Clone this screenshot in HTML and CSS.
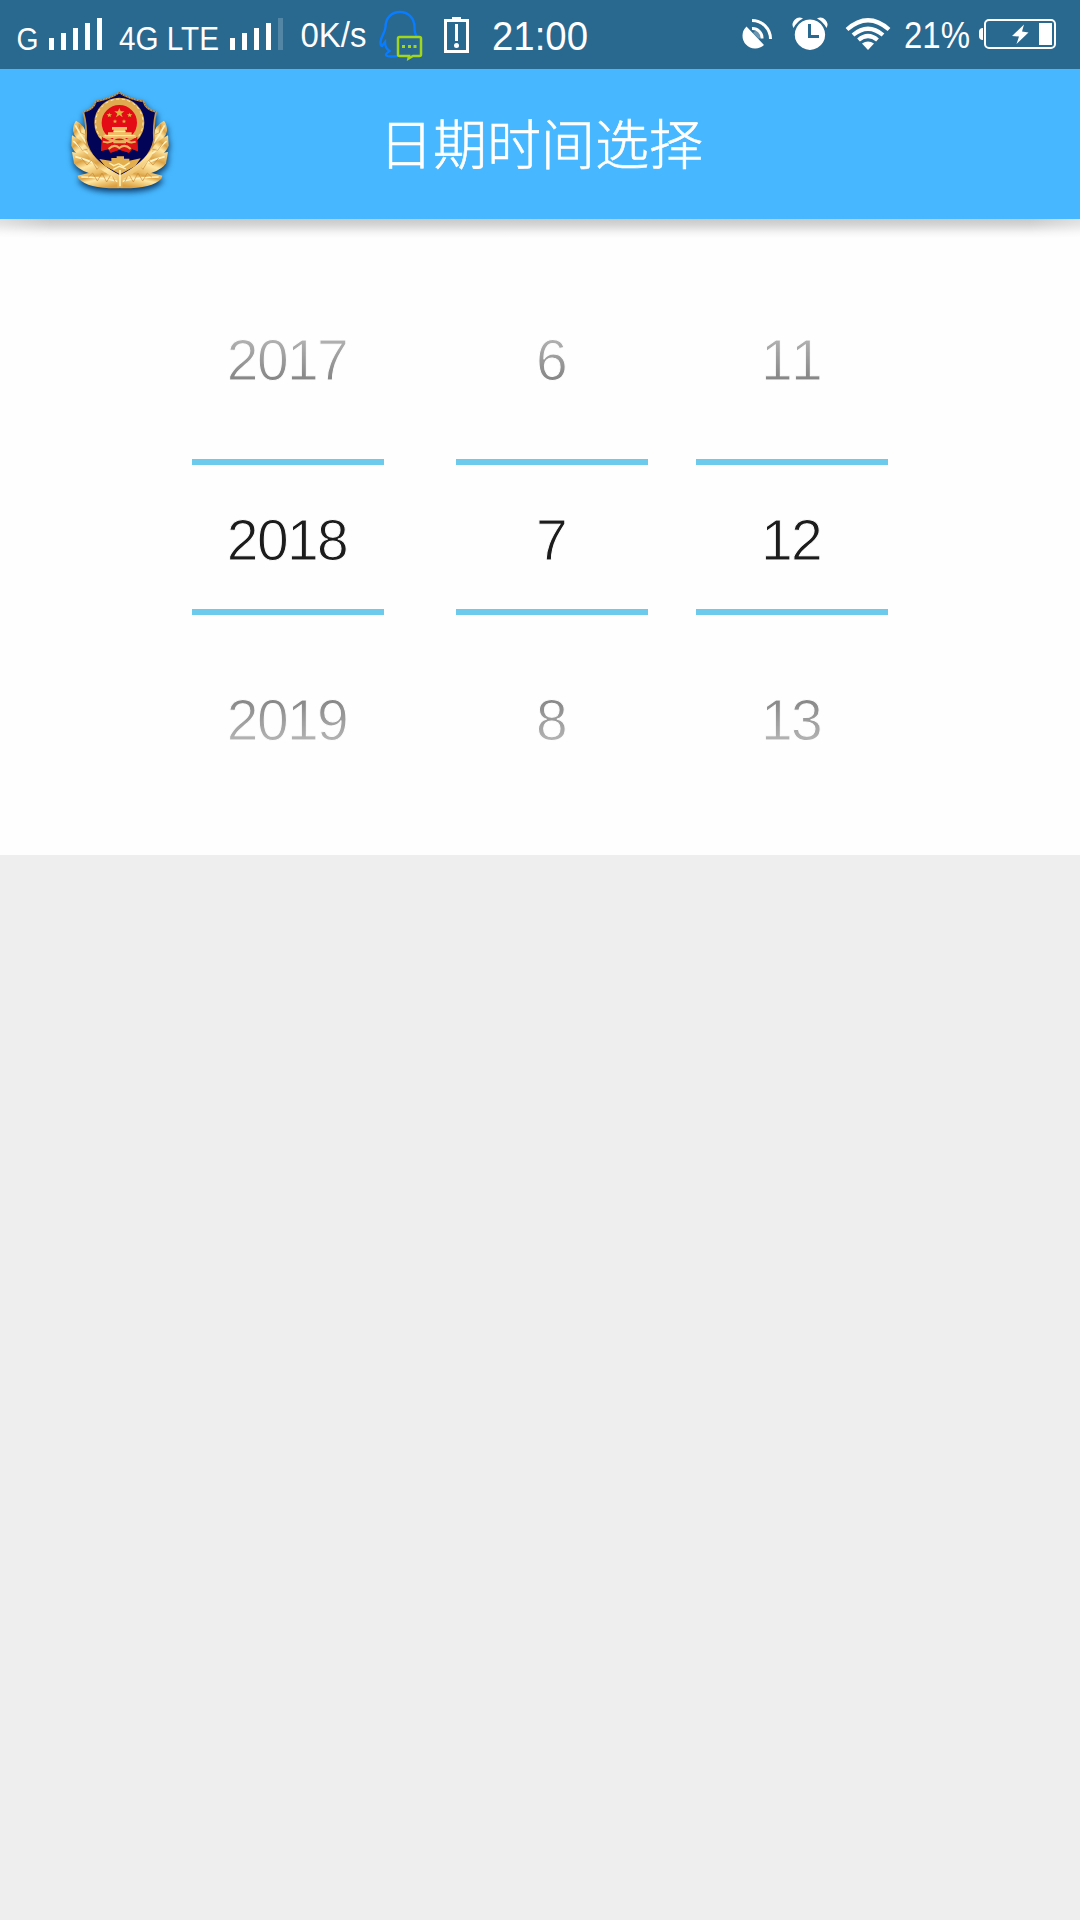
FILE: index.html
```html
<!DOCTYPE html>
<html lang="zh-CN">
<head>
<meta charset="utf-8">
<title>日期时间选择</title>
<link rel="stylesheet" href="styles.css">
</head>
<body>
<div class="status">
  <svg width="110" height="69" viewBox="0 0 110 69" fill="#fff">
    <text x="16.500" y="50" font-size="32" textLength="22" lengthAdjust="spacingAndGlyphs">G</text>
    <path d="M49 38h5v12h-5zM61 33h5v17h-5zM73 28h5v22h-5zM85 23h5v27h-5zM97 18h5v32h-5z"/>
  </svg>
  <svg width="180" height="69" viewBox="110 0 180 69" fill="#fff">
    <text x="119" y="50" font-size="33" textLength="100" lengthAdjust="spacingAndGlyphs">4G LTE</text>
    <path d="M230 38h5v12h-5zM242 33h5v17h-5zM254 28h5v22h-5zM266 23h5v27h-5z"/>
    <path d="M278 18h5v32h-5z" opacity=".2"/>
  </svg>
  <svg width="85" height="69" viewBox="290 0 85 69" fill="#fff">
    <text x="300.500" y="47" font-size="35" textLength="66" lengthAdjust="spacingAndGlyphs">0K/s</text>
  </svg>
  <svg width="55" height="69" viewBox="375 0 55 69" fill="none">
    <path d="M416.500 36C414.500 33 414.500 31 414.500 27C414.500 18 408 12 400 12C391.500 12 385.500 18 385.500 27C385.500 32 381 36 380.500 42C380.500 44 381 46 382 46L385 42C385 47 388 50 389.500 51C387 53 385.500 54 386 55C387 57 394 56.500 398 56" stroke="#0a7cff" stroke-width="2.400"/>
    <path d="M399.500 37h20q1.500 0 1.500 1.500v16q0 1.500-1.500 1.500H413l-4.500 2.500.5-2.500h-9.500q-1.500 0-1.500-1.500v-16q0-1.500 1.500-1.500z" stroke="#a2d61c" stroke-width="2.500"/>
    <path d="M402 45h3v3h-3zM408 45h3v3h-3zM413.500 45h3v3h-3z" fill="#a2d61c"/>
  </svg>
  <svg width="55" height="69" viewBox="430 0 55 69" fill="#fff">
    <path d="M444 19h8v-2h9v2h8v34h-25zM447 22v28h19V22z" fill-rule="evenodd"/>
    <path d="M455 24h3v17h-3z"/><circle cx="456.500" cy="45.500" r="2.500"/>
  </svg>
  <svg width="115" height="69" viewBox="485 0 115 69" fill="#fff">
    <text x="492" y="50" font-size="41.500" textLength="96" lengthAdjust="spacingAndGlyphs">21:00</text>
  </svg>
  <svg class="right" width="50" height="69" viewBox="735 0 50 69" fill="#fff">
    <path d="M746.500 26.500L764 45A12.300 12.300 0 1 1 746.500 26.500z"/>
    <path d="M752 28.500A9.500 9.500 0 0 1 762 38.500M752 20.500A18.500 18.500 0 0 1 770.500 39" fill="none" stroke="#fff" stroke-width="3"/>
    <path d="M753 33L757 29L762 35L759 39z" fill="#fff" opacity=".3"/>
  </svg>
  <svg width="55" height="69" viewBox="785 0 55 69" fill="#fff">
    <path d="M810 19.500A15.200 15.200 0 1 1 809.900 19.500zM808 24v14h11v-3h-8V24z" fill-rule="evenodd"/>
    <path d="M793.500 28A7 7 0 0 1 803 18.500A22 22 0 0 0 793.500 28zM817 18.500A7 7 0 0 1 826.500 28A22 22 0 0 0 817 18.500z"/>
  </svg>
  <svg width="60" height="69" viewBox="840 0 60 69" fill="none" stroke="#fff" stroke-width="4.200">
    <path d="M847 29.500Q868 11 889 29.500M853 35Q868 22.500 883 35M858.500 40Q868 32 877.500 40"/>
    <path d="M862 43.500Q868 39.500 874 43.500L868 50z" fill="#fff" stroke="none"/>
  </svg>
  <svg width="75" height="69" viewBox="900 0 75 69" fill="#fff">
    <text x="904" y="48" font-size="36" textLength="66" lengthAdjust="spacingAndGlyphs">21%</text>
  </svg>
  <svg width="105" height="69" viewBox="975 0 105 69" fill="#fff">
    <rect x="985" y="20" width="70" height="28" rx="4" fill="none" stroke="#fff" stroke-width="2"/>
    <path d="M983 28q-4 0-4 4v4q0 4 4 4zM1039 23h13v22h-13zM1024 24.500L1012 36l7 .5-2.500 7.500 12-11.500-6.500-1z"/>
  </svg>
</div>
<header class="header">
  <svg class="badge" width="140" height="140" viewBox="0 0 420 420">
    <defs>
      <linearGradient id="gold" x1="0" y1="0" x2=".6" y2="1"><stop offset="0" stop-color="#ffe6a0"/><stop offset=".35" stop-color="#dca345"/><stop offset=".55" stop-color="#ffe7a2"/><stop offset="1" stop-color="#dda040"/></linearGradient>
      <g id="leaves">
        <path d="M78 152Q106 166 108 194L118 236Q72 209 69 182Q69 164 78 152z"/>
        <path d="M66 196Q102 213 122 246L130 276Q76 260 64 227z"/>
        <path d="M66 246Q125 251 167 284L198 326Q93 314 72 280z"/>
        <path d="M83 317Q150 295 210 323L209 355Q116 357 86 326z"/>
        <path d="M76 166Q90 193 109 219M70 213Q96 240 124 258M76 260Q130 273 196 315M94 321Q155 321 206 335" fill="none" stroke="#fff3c4" stroke-width="5"/>
        <path d="M87 162l5 26 12 6M80 218l17 23 19-4M94 264l17 21 14-15 16 28 15-16 13 28M114 322l14-13 14 24 14-24 14 27 14-25 12 25" fill="none" stroke="#c98a35" stroke-width="2"/>
      </g>
    </defs>
    <g class="emblem">
      <g fill="url(#gold)"><use href="#leaves"/><use href="#leaves" transform="matrix(-1 0 0 1 420 0)"/></g>
      <path d="M208 68Q238 88 280 94Q287 119 318 126Q309 166 312 210Q301 274 210 320Q119 274 108 210Q111 166 100 126Q131 119 138 94Q178 88 208 68z" fill="#020557" stroke="#c9984e" stroke-width="5"/>
      <path d="M112 230Q136 276 210 316Q284 276 308 230L305 258Q278 302 218 327V354H202V327Q139 300 114 256z" fill="url(#gold)"/>
      <path d="M148 267L184 273V264H200V259H222V266H238V272L272 265L256 288L210 313L165 288z" fill="#e3af4e"/>
      <path d="M178 279l13 8 15-6 15 9 18-12M190 298l18-9 20 8" fill="none" stroke="#fff0b6" stroke-width="4"/>
      <path d="M157 202L153 243L174 238L182 248L208 239L237 248L246 237L264 244L260 202z" fill="#d30e12"/>
      <circle cx="208" cy="158" r="64" fill="#e50b16" stroke="#dfaa50" stroke-width="22"/>
      <circle cx="208" cy="158" r="71" fill="none" stroke="#fff0ad" stroke-width="3" stroke-dasharray="9 8"/>
      <path d="M156 200L153 243L174 238L182 248L208 239L237 248L246 237L264 244L262 200L232 216H184z" fill="#dc1414"/>
      <path d="M208 114l4 10 11 0-9 7 4 11-10-7-10 7 4-11-9-7 11 0zM178 128l2 5 6 0-5 4 2 5-5-3-5 3 2-5-5-4 6 0zM239 128l2 5 6 0-5 4 2 5-5-3-5 3 2-5-5-4 6 0zM195 148l2 4 5 0-4 3 1 5-4-3-4 3 1-5-4-3 5 0zM222 148l2 4 5 0-4 3 1 5-4-3-4 3 1-5-4-3 5 0z" fill="#e0b33f"/>
      <path d="M186 171h45v8h-5v8h19v7h13v10h-98v-10h14v-7h17v-8h-5z" fill="#f1bd65"/>
      <path d="M164 197h90M190 184h37" stroke="#fff1bb" stroke-width="3"/>
      <path d="M159 215Q182 222 192 207Q208 198 224 207Q237 222 257 215M176 237Q193 220 208 234Q224 220 242 237M190 217h38" fill="none" stroke="#edb263" stroke-width="6"/>
      <path d="M208 68Q238 88 280 94Q287 119 318 126M208 68Q178 88 138 94Q131 119 100 126" fill="none" stroke="#71451d" stroke-width="3" stroke-dasharray="4 5"/>
      <path d="M210 300v49" stroke="#fff0b5" stroke-width="5"/>
    </g>
  </svg>
  <h1 class="title">日期时间选择</h1>
</header>
<main class="panel">
  <div class="wheel year"><div class="values"><span>2017</span><span>2018</span><span>2019</span></div><div class="frame"></div></div>
  <div class="wheel month"><div class="values"><span>6</span><span>7</span><span>8</span></div><div class="frame"></div></div>
  <div class="wheel day"><div class="values"><span>11</span><span>12</span><span>13</span></div><div class="frame"></div></div>
</main>
</body>
</html>
```
FILE: styles.css
```css
* { box-sizing: border-box; }
body {
  margin: 0;
  min-height: 1920px;
  background: #eee;
  font-family: "Liberation Sans", "Noto Sans CJK SC", sans-serif;
}
.status {
  display: flex;
  height: 69px;
  background: #29688f;
}
.status svg { display: block; flex: none; }
.status .right { margin-left: auto; }
.header {
  position: relative;
  display: grid;
  grid-template-columns: 190px 1fr 190px;
  height: 150px;
  background: #47b8ff;
}
.header::after {
  content: "";
  position: absolute;
  top: 100%;
  left: 0;
  right: 0;
  height: 19px;
  background: linear-gradient(#c8c8c8, #d6d6d6 30%, #f4f4f4 72%, #fefefe);
  -webkit-mask: linear-gradient(90deg, rgba(0,0,0,.6), #000 50px, #000 1030px, rgba(0,0,0,.6));
  mask: linear-gradient(90deg, rgba(0,0,0,.6), #000 50px, #000 1030px, rgba(0,0,0,.6));
}
.badge { display: block; margin: 1px 0 0 50px; }
.emblem { filter: drop-shadow(2px 10px 10px rgba(0, 30, 70, .85)); }
.title {
  margin: 0;
  padding-left: 2px;
  color: #fff;
  font: 300 54px/146px "Noto Sans CJK SC", sans-serif;
  text-align: center;
  -webkit-text-stroke: .6px #fff;
}
.panel {
  display: flex;
  height: 636px;
  padding: 51px 192px 0;
  background: #fefefe;
}
.wheel { position: relative; width: 192px; height: 540px; }
.month { margin-left: 72px; }
.day { margin-left: 48px; }
.values {
  display: grid;
  grid-template-rows: repeat(3, 180px);
  -webkit-mask: linear-gradient(transparent 0, #000 205px, #000 330px, transparent 540px);
  mask: linear-gradient(transparent 0, #000 205px, #000 330px, transparent 540px);
}
.values span {
  padding-right: 2px;
  color: #1c1c1c;
  font-size: 57px;
  line-height: 180px;
  letter-spacing: -1.6px;
  text-align: center;
  -webkit-text-stroke: 1px #fefefe;
}
.day span { font-kerning: none; }
.frame {
  position: absolute;
  top: 189px;
  left: 0;
  width: 192px;
  height: 156px;
  border: solid #6ccaec;
  border-width: 6px 0;
}
```
